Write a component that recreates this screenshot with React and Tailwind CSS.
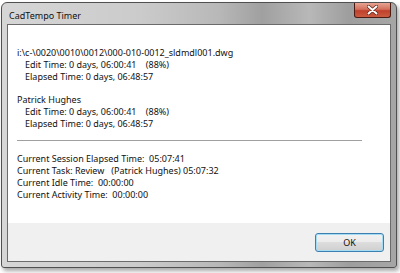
export default function App() {
  const font = { fontFamily: '"Noto Sans", "Open Sans", sans-serif' }
  return (
    <div className="w-[400px] h-[273px] bg-white overflow-hidden" style={font}>
      <div className="ml-[1px] mt-[2px] w-[396px] h-[266px] rounded-t-[6px] rounded-b-[3px] border border-[#505050] bg-[linear-gradient(to_right,#d6d6d6_0%,#cbcbcb_35%,#b8b8b8_55%,#a0a0a0_66%,#b8b8b8_78%,#9e9e9e_88%,#a6a6a6_100%)] shadow-[2px_3px_4px_rgba(0,0,0,0.35)] flex flex-col">
        {/* Title bar */}
        <div className="h-[21px] flex items-start justify-between pl-[7px] pr-[5px]">
          <span className="text-[9px] leading-[12px] mt-[7px] text-[#111]">CadTempo Timer</span>
          <div className="w-[37px] h-[15px] rounded-b-[3px] border border-t-0 border-[#4a1c14] bg-[linear-gradient(to_bottom,#e8a493_0%,#d2705c_45%,#c0402a_55%,#c95a40_100%)] flex items-center justify-center">
            <svg width="11" height="10" viewBox="0 0 11 10">
              <path d="M1.5 1.5 L9.5 8.5 M9.5 1.5 L1.5 8.5" stroke="#5a2418" strokeWidth="3.4" strokeLinecap="round" />
              <path d="M1.5 1.5 L9.5 8.5 M9.5 1.5 L1.5 8.5" stroke="#ffffff" strokeWidth="2" strokeLinecap="round" />
            </svg>
          </div>
        </div>

        {/* Client area */}
        <div className="mx-[5px] mb-[5px] flex-1 border border-[#6b6b6b] flex flex-col">
          <div className="flex-1 bg-white pl-[9px] pt-[22px] text-[9px] leading-[12px] text-[#111] whitespace-pre">
            <div>i:\c-\0020\0010\0012\000-010-0012_sldmdl001.dwg</div>
            <div className="pl-[8px]">Edit Time: 0 days, 06:00:41    (88%)</div>
            <div className="pl-[8px]">Elapsed Time: 0 days, 06:48:57</div>

            <div className="mt-[11px]">Patrick Hughes</div>
            <div className="pl-[8px]">Edit Time: 0 days, 06:00:41    (88%)</div>
            <div className="pl-[8px]">Elapsed Time: 0 days, 06:48:57</div>

            <div className="mt-[10px] mr-[28px] h-[2px] border-t border-[#a0a0a0] border-b border-b-white" />

            <div className="mt-[11px]">Current Session Elapsed Time:  05:07:41</div>
            <div>Current Task: Review   (Patrick Hughes) 05:07:32</div>
            <div>Current Idle Time:  00:00:00</div>
            <div>Current Activity Time:  00:00:00</div>
          </div>
          <div className="h-[38px] bg-[#f0f0f0] flex items-start justify-end pt-[10px] pr-[6px]">
            <button className="w-[69px] h-[19px] rounded-[3px] border border-[#3c7fb1] shadow-[inset_0_0_0_1px_#a6dcf3] bg-[linear-gradient(to_bottom,#f2f2f2_0%,#ebebeb_50%,#dddddd_50%,#cfcfcf_100%)] text-[9px] leading-[12px] text-[#111]">
              OK
            </button>
          </div>
        </div>
      </div>
    </div>
  )
}
